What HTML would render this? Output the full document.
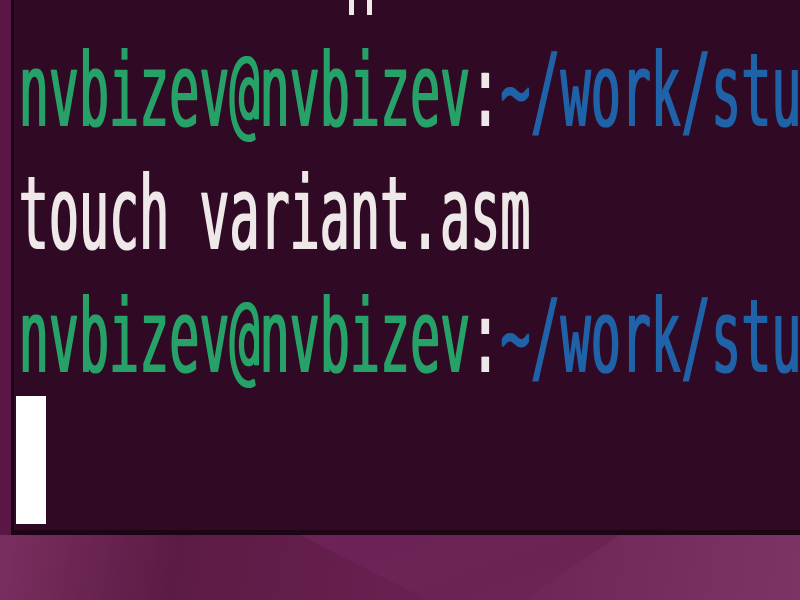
<!DOCTYPE html>
<html><head><meta charset="utf-8"><style>
html,body{margin:0;padding:0;width:800px;height:600px;overflow:hidden}
body{background:linear-gradient(100deg,#8a3a70 0%,#5c1b44 30%,#6a2152 60%,#7a3566 100%);position:relative}
.clip{position:absolute;left:0;top:0;width:800px;height:600px;overflow:hidden}
.term{position:absolute;left:11px;top:0;width:789px;height:530px;background:#300a24;border-bottom:5px solid #1e0516;border-left:3px solid #1e0516}
.side{position:absolute;left:0;top:0;width:11px;height:535px;background:#5a1745}
.ln{position:absolute;left:18px;font-family:"DejaVu Sans Mono","Liberation Mono",monospace;font-size:50px;line-height:50px;white-space:pre;transform:scaleY(2.05);transform-origin:0 42px;text-shadow:1.5px 0 currentColor}
.g{color:#26a269}.w{color:#eee8e8}.b{color:#1f62a8}
.cur{position:absolute;left:16px;top:396px;width:30px;height:128px;background:#fff}
.q{position:absolute;top:0;width:5px;height:15px;background:#eee8e8}
.shape{position:absolute;left:300px;top:535px;width:320px;height:65px;background:linear-gradient(160deg,#6d2258,#6a2452);clip-path:polygon(0 0,100% 0,70% 100%,40% 100%)}
</style></head><body>
<div class="clip">
<div class="shape"></div>
<div class="side"></div>
<div class="term"></div>
<div class="q" style="left:349px"></div><div class="q" style="left:367px"></div>
<div class="ln" style="top:84px"><span class="g">nvbizev@nvbizev</span><span class="w">:</span><span class="b">~/work/stu</span></div>
<div class="ln w" style="top:207px">touch variant.asm</div>
<div class="ln" style="top:330px"><span class="g">nvbizev@nvbizev</span><span class="w">:</span><span class="b">~/work/stu</span></div>
<div class="cur"></div>
</div>
</body></html>
